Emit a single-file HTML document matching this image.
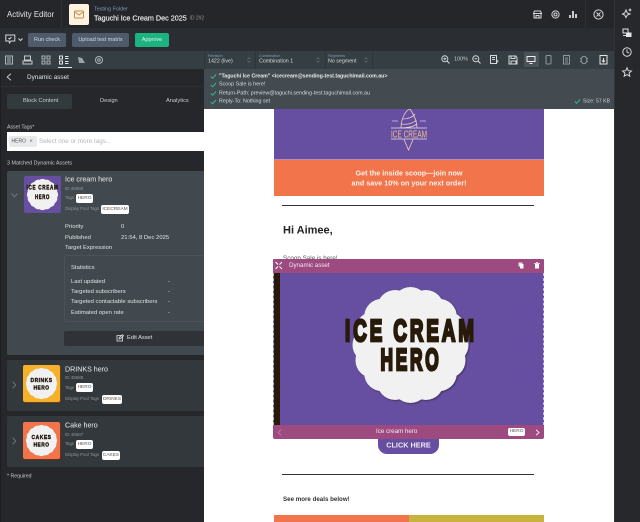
<!DOCTYPE html>
<html><head><meta charset="utf-8"><style>
html,body{margin:0;padding:0;width:640px;height:522px;overflow:hidden;background:#25272b}
body{position:relative;font-family:"Liberation Sans",sans-serif;color:#e8eaeb}
.a{position:absolute}
.t{position:absolute;white-space:nowrap;line-height:1;transform:translateY(-50%)}
svg{position:absolute;overflow:visible}
.i{fill:none;stroke:#d5d9db;stroke-width:1}
.pill{position:absolute;background:#fff;color:#555;border-radius:2px;font-size:4.8px;line-height:9px;height:9px;text-align:center}
.btn{position:absolute;top:33px;height:14px;line-height:14px;font-size:5.5px;text-align:center;border-radius:2px;color:#d3d9e0;background:#4d5b6b}
.m{font-size:5.900px;color:#dfe2e3}
.h{font-family:"Liberation Sans";font-weight:bold;fill:#20150a;stroke:#20150a}
</style></head><body>
<svg width="0" height="0" style="position:absolute"><defs>
<g id="sc" fill="#f1f1f1"><circle cx="0" cy="0" r="50"/>
<circle cx="0" cy="-40" r="18"/><circle cx="15.300" cy="-37" r="18"/><circle cx="28.300" cy="-28.300" r="18"/><circle cx="37" cy="-15.300" r="18"/><circle cx="40" cy="0" r="18"/><circle cx="37" cy="15.300" r="18"/><circle cx="28.300" cy="28.300" r="18"/><circle cx="15.300" cy="37" r="18"/><circle cx="0" cy="40" r="18"/><circle cx="-15.300" cy="37" r="18"/><circle cx="-28.300" cy="28.300" r="18"/><circle cx="-37" cy="15.300" r="18"/><circle cx="-40" cy="0" r="18"/><circle cx="-37" cy="-15.300" r="18"/><circle cx="-28.300" cy="-28.300" r="18"/><circle cx="-15.300" cy="-37" r="18"/></g>
</defs></svg>

<!-- top bars -->
<div class="a" style="left:0;top:0;width:614px;height:28px;background:#24262a"></div>
<div class="a" style="left:0;top:28px;width:614px;height:23px;background:#2a2d32"></div>
<div class="a" style="left:0;top:51px;width:614px;height:18px;background:#353e42"></div>
<div class="a" style="left:61px;top:0;width:1px;height:28px;background:#2e3135"></div>
<div class="a" style="left:585px;top:0;width:1px;height:28px;background:#2e3135"></div>
<div class="a" style="left:614px;top:0;width:26px;height:522px;background:#26282c;border-left:1px solid #30343a;box-sizing:border-box"></div>

<div class="t" style="left:7px;top:14.500px;font-size:7.800px;color:#e4e6e8">Activity Editor</div>
<div class="a" style="left:69px;top:4px;width:20px;height:21px;background:#fdf3e0;border-radius:2px"></div>
<svg style="left:74px;top:10px" width="10" height="9"><rect x=".5" y="1" width="9" height="7" rx="1" fill="none" stroke="#c98a4a"/><path d="M.8 2L5 5l4.200-3" fill="none" stroke="#c98a4a"/></svg>
<div class="t" style="left:94px;top:10px;font-size:5.400px;color:#7d98bd">Testing Folder</div>
<div class="t" style="left:94px;top:18px;font-size:7.200px;color:#eceeef;-webkit-text-stroke:.15px #eceeef">Taguchi Ice Cream Dec 2025</div>
<div class="t" style="left:189.500px;top:18.500px;font-size:5px;color:#8a8f94">ID 292</div>

<!-- header right icons -->
<svg style="left:533px;top:10px" width="9" height="9"><path class="i" d="M1 3.500V8h7V3.500M.5 3.500L1.500 1h6l1 2.500zM3 8V5.500h3V8"/></svg>
<svg style="left:551px;top:10px" width="9" height="9"><circle class="i" cx="4.500" cy="4.500" r="3.600"/><circle class="i" cx="4.500" cy="4.500" r="1.500"/></svg>
<svg style="left:569px;top:10px" width="9" height="9"><path d="M0 5h2v3H0zM3 1h2v7H3zM6 4h2v4H6z" fill="#c9cdd0"/></svg>
<svg style="left:593px;top:9px" width="11" height="11"><circle class="i" cx="5.500" cy="5.500" r="4.600"/><path class="i" d="M3.500 3.500l4 4M7.500 3.500l-4 4"/></svg>
<!-- rail icons -->
<svg style="left:622px;top:8px" width="10" height="10"><path class="i" d="M4 2l1.300 3L8 6 5.300 7 4 9.500 2.700 7 .5 6l2.200-1zM8 .5v3M6.500 2h3"/></svg>
<svg style="left:622px;top:28px" width="10" height="10"><rect x="1" y="1" width="5" height="4" fill="none" stroke="#e2e5e6"/><rect x="4" y="4.500" width="5.500" height="4.500" fill="#e2e5e6"/><path class="i" d="M1 7.500h3"/></svg>
<svg style="left:622px;top:47px" width="10" height="10"><circle class="i" cx="5" cy="5" r="4.200"/><path class="i" d="M5 2.500V5l2 1.200"/></svg>
<svg style="left:622px;top:67px" width="10" height="10"><path class="i" d="M5 .8l1.300 2.900 3.100.3-2.300 2.100.7 3.100L5 7.600 2.200 9.200l.7-3.100L.6 4l3.100-.3z"/></svg>

<!-- toolbar -->
<svg style="left:5px;top:34px" width="11" height="10"><path class="i" d="M.8 1h9v6H6L4.500 9 4 7H.8z"/><path class="i" d="M3.500 4l1 1 2-2"/></svg>
<svg style="left:18px;top:38px" width="5" height="3"><path class="i" d="M.5.500L2.500 2.500 4.500.500" stroke-width=".7"/></svg>
<div class="btn" style="left:28px;width:38px">Run check</div>
<div class="btn" style="left:72px;width:57px">Upload test matrix</div>
<div class="btn" style="left:135px;width:34px;background:#1cb381;color:#d8f5ea">Approve</div>

<!-- tool icons -->
<svg style="left:5px;top:55px" width="100" height="10" class="i">
<rect x=".5" y="1" width="7" height="8" fill="none" stroke="#aeb5b8"/><path d="M2 3h4M2 5h4M2 7h4" stroke="#aeb5b8"/>
<path d="M19.500 1h6v4h-6zM18 6h9v3h-9z" fill="none" stroke="#c3c9cb"/>
<path d="M37 1h3v3h-3zM42 1h3v3h-3zM37 6h3v3h-3zM42 6h3v3h-3z" fill="none" stroke="#aeb5b8"/>
<path d="M54.500 1h3v3h-3zM60 1.500h3.500M60 3.500h3.500M54.500 6h3v3h-3zM60 6.500h3.500M60 8.500h3.500" fill="none" stroke="#e2e5e6"/>
<path d="M73 2l4 1 3 5H74z" fill="#9ca4a8" stroke="none"/>
<circle cx="94" cy="5" r="3.500" fill="none" stroke="#aeb5b8"/><circle cx="94" cy="5" r="1.300" fill="none" stroke="#aeb5b8"/>
</svg>
<div class="a" style="left:58px;top:67px;width:14px;height:1px;background:#e2e5e6"></div>

<div class="a" style="left:204px;top:51px;width:1px;height:18px;background:#2e3538"></div>
<div class="a" style="left:255px;top:51px;width:1px;height:18px;background:#2e3538"></div>
<div class="a" style="left:325px;top:51px;width:1px;height:18px;background:#2e3538"></div>
<div class="a" style="left:372px;top:51px;width:1px;height:18px;background:#2e3538"></div>
<div class="t" style="left:208px;top:56.500px;font-size:3.800px;color:#7f9fc2">Revision</div>
<div class="t" style="left:208px;top:62px;font-size:5.300px;color:#d8dcde">1422 (live)</div>
<div class="t" style="left:259px;top:56.500px;font-size:3.800px;color:#7f9fc2">Combination</div>
<div class="t" style="left:259px;top:62px;font-size:5.300px;color:#d8dcde">Combination 1</div>
<div class="t" style="left:328px;top:56.500px;font-size:3.800px;color:#7f9fc2">Segments</div>
<div class="t" style="left:328px;top:62px;font-size:5.300px;color:#d8dcde">No segment</div>
<svg style="left:247px;top:57px" width="4" height="6"><path d="M.5 2.200L2 .7l1.500 1.500M.5 3.800L2 5.300l1.500-1.500" fill="none" stroke="#717a7e" stroke-width=".6"/></svg>
<svg style="left:316px;top:57px" width="4" height="6"><path d="M.5 2.200L2 .7l1.500 1.500M.5 3.800L2 5.300l1.500-1.500" fill="none" stroke="#717a7e" stroke-width=".6"/></svg>
<svg style="left:364px;top:57px" width="4" height="6"><path d="M.5 2.200L2 .7l1.500 1.500M.5 3.800L2 5.300l1.500-1.500" fill="none" stroke="#717a7e" stroke-width=".6"/></svg>

<svg style="left:441px;top:55px" width="9" height="9"><circle class="i" cx="3.800" cy="3.800" r="3"/><path class="i" d="M6 6l2.500 2.500M2.500 3.800h2.600M3.800 2.500v2.600"/></svg>
<div class="t" style="left:454px;top:60px;font-size:5.500px;color:#c4c9cb">100%</div>
<svg style="left:472px;top:55px" width="9" height="9"><circle class="i" cx="3.800" cy="3.800" r="3"/><path class="i" d="M6 6l2.500 2.500M2.500 3.800h2.600"/></svg>
<div class="a" style="left:524px;top:52px;width:15px;height:15px;background:#485257;border-radius:1px"></div>
<svg style="left:490px;top:55px" width="120" height="10" class="i">
<path d="M.5.500h6v8h-6zM2 2.500h3M2 4.500h3M6 6h2.500M7 5v3" fill="none" stroke="#d5d9db"/>
<path d="M19 1h7l1 1.500V9h-8zM21 1v2.500h4V1M21 9V6h5v3" fill="none" stroke="#d5d9db"/>
<path d="M37 1.500h8v5h-8zM39.500 8.500h3" fill="none" stroke="#eceeef"/>
<rect x="56" y=".5" width="5" height="8.500" rx="1" fill="none" stroke="#8f979b"/>
<path d="M73.500.5h6v8.500h-6zM75 3h3M75 5h3M75 7h3" fill="none" stroke="#8f979b"/>
<ellipse cx="94" cy="5" rx="2.800" ry="3.800" fill="none" stroke="#8f979b"/><path d="M90 3l1.500 1M98 3l-1.500 1M90 7l1.500-1M98 7l-1.500-1" stroke="#8f979b" fill="none"/>
<rect x="110" y=".5" width="7" height="8.500" fill="none" stroke="#e2e5e6"/><path d="M113.500 3v4M112 5.500l1.500 1.500 1.500-1.500" fill="none" stroke="#e2e5e6"/>
</svg>

<!-- preview -->
<div class="a" style="left:204px;top:69px;width:410px;height:453px;background:#fff"></div>
<div class="a" style="left:274px;top:109px;width:269.500px;height:50px;background:#664ea0"></div>
<svg style="left:388px;top:109px" width="46" height="42">
<path d="M22 0c-4 1-9 9-9 19M22 0c2 3 7 11 7 19M15 10c5 0 10-2 12-5M13.500 15c6 1 12-1 15-4M13 19c6 0 12-1 16-4" fill="none" stroke="#f0d2c0" stroke-width=".8"/>
<path d="M3 19h36M3 30h36" stroke="#e9e2f2" stroke-width=".8"/>
<path d="M4 12h6M32 12h6" stroke="#b9a8d6" stroke-width="1"/>
<path d="M16 30.500l4.500 10.500 4.500-10.500" fill="none" stroke="#f0d2c0" stroke-width=".8"/>
<text x="21" y="28.500" text-anchor="middle" font-family="Liberation Sans" font-size="10" fill="#f2c58e" textLength="36" lengthAdjust="spacingAndGlyphs">ICE CREAM</text>
</svg>
<div class="a" style="left:274px;top:159px;width:270px;height:1px;background:#b78ac0"></div>
<div class="a" style="left:274px;top:160px;width:270px;height:36px;background:#f2744a"></div>
<div class="t" style="left:274px;width:270px;top:172.500px;text-align:center;font-size:7.200px;font-weight:bold;color:#fdf1ea;transform:translate(0,-50%)">Get the inside scoop—join now</div>
<div class="t" style="left:274px;width:270px;top:182.500px;text-align:center;font-size:7.200px;font-weight:bold;color:#fdf1ea;transform:translate(0,-50%)">and save 10% on your next order!</div>
<div class="a" style="left:282px;top:204.500px;width:252px;height:1px;background:#333"></div>
<div class="t" style="left:283px;top:230.500px;font-size:11px;font-weight:bold;color:#222">Hi Aimee,</div>
<div class="t" style="left:283px;top:259px;font-size:6.300px;color:#555">Scoop Sale is here!</div>

<!-- dynamic asset block -->
<div class="a" style="left:273px;top:259px;width:271px;height:14.500px;background:#9c4a80;border-radius:1px 1px 0 0"></div>
<div class="a" style="left:273px;top:273px;width:271px;height:152px;background:#664ea0;border-left:1px dashed #bbb;border-right:1px dashed #cbb8ee;box-sizing:border-box"></div>
<div class="a" style="left:274px;top:273px;width:6px;height:152px;background:#271a08"></div>
<svg style="left:275px;top:261px" width="8" height="9"><path d="M.5 1L3 3.500M7 1L4.500 3.500M.5 8L3 5.500M7 8L4.500 5.500" stroke="#fff" stroke-width="1" fill="none"/></svg>
<div class="t" style="left:289px;top:266px;font-size:6.200px;color:#f3e6ee">Dynamic asset</div>
<svg style="left:518px;top:262px" width="6" height="7"><path d="M.5.500h4v4h-4z" fill="#e6e0e6"/><path d="M2 2h3.500v4.500H2z" fill="#fff"/></svg>
<svg style="left:534px;top:262px" width="6" height="7"><path d="M1 2h4v4.500H1zM0 1h6v.7H0zM2 .2h2V1H2z" fill="#fff"/></svg>
<svg style="left:344px;top:279px;filter:drop-shadow(1px 1px .7px rgba(40,30,50,.55))" width="134" height="132"><g transform="translate(66.500,66)"><use href="#sc"/></g></svg>
<svg style="left:340px;top:310px" width="142" height="66">
<text class="h" x="71" y="31" text-anchor="middle" font-size="31" stroke-width="2.800" letter-spacing="5" textLength="132" lengthAdjust="spacingAndGlyphs" style="fill:#271a08;stroke:#271a08">ICE CREAM</text>
<text class="h" x="71" y="60" text-anchor="middle" font-size="31" stroke-width="2.800" letter-spacing="5" textLength="61" lengthAdjust="spacingAndGlyphs" style="fill:#271a08;stroke:#271a08">HERO</text>
</svg>
<div class="a" style="left:273px;top:425px;width:271px;height:14px;background:#9c4a80;border-radius:0 0 2px 2px"></div>
<svg style="left:277px;top:429px" width="5" height="7"><path d="M4 .7L1 3.500 4 6.300" fill="none" stroke="#b97aa3" stroke-width="1"/></svg>
<div class="t" style="left:376px;top:432px;font-size:6.200px;color:#f6e9f1">Ice cream hero</div>
<div class="pill" style="left:508px;top:428px;width:17px;height:8px;line-height:8px">HERO</div>
<svg style="left:535px;top:429px" width="5" height="7"><path d="M1 .7L4 3.500 1 6.300" fill="none" stroke="#f2e3ec" stroke-width="1"/></svg>
<div class="a" style="left:378px;top:439px;width:61px;height:15px;background:#664ea0;border-radius:0 0 9px 9px"></div>
<div class="t" style="left:378px;width:61px;top:445px;text-align:center;font-size:7.300px;font-weight:bold;color:#f0ebf7;transform:translate(0,-50%)">CLICK HERE</div>
<div class="a" style="left:282px;top:474px;width:252px;height:1px;background:#333"></div>
<div class="t" style="left:283px;top:499.500px;font-size:6.200px;font-weight:bold;color:#333">See more deals below!</div>
<div class="a" style="left:274px;top:515px;width:135px;height:7px;background:#f2744a"></div>
<div class="a" style="left:409px;top:515px;width:135px;height:7px;background:#c8b33f"></div>

<!-- notice -->
<div class="a" style="left:204px;top:69px;width:410px;height:40px;background:#434b50"></div>
<svg style="left:210px;top:73px" width="7" height="34"><path d="M.8 3.500l1.800 1.800L6 1.500M.8 12l1.800 1.800L6 10M.8 20.500l1.800 1.800L6 18.500M.8 29l1.800 1.800L6 27" fill="none" stroke="#2fb98e" stroke-width="1"/></svg>
<div class="t" style="left:219px;top:76.500px;font-size:5.250px;font-weight:bold;color:#e9ebec">"Taguchi Ice Cream" &lt;icecream@sending-test.taguchimail.com.au&gt;</div>
<div class="t" style="left:219px;top:85px;font-size:5.350px;color:#d6dadc">Scoop Sale is here!</div>
<div class="t" style="left:219px;top:93.500px;font-size:5.350px;color:#d6dadc">Return-Path: preview@taguchi.sending-test.taguchimail.com.au</div>
<div class="t" style="left:219px;top:102px;font-size:5.350px;color:#d6dadc">Reply-To: Nothing set</div>
<svg style="left:574px;top:98px" width="7" height="7"><path d="M.8 3.500l1.800 1.800L6 1.500" fill="none" stroke="#2fb98e" stroke-width="1"/></svg>
<div class="t" style="left:583px;top:101.500px;font-size:5.200px;color:#c9ced0">Size: 57 KB</div>

<!-- left panel -->
<div class="a" style="left:0;top:69px;width:204px;height:453px;background:#25272b;border-left:1px solid #1d1e21;box-sizing:border-box"></div>
<div class="a" style="left:0;top:86px;width:204px;height:1px;background:#2c2f33"></div>
<svg style="left:6px;top:73px" width="6" height="8"><path d="M5 .7L1.200 4 5 7.300" fill="none" stroke="#d5d9db" stroke-width=".9"/></svg>
<div class="t" style="left:27px;top:77.500px;font-size:6.400px;color:#dfe2e3">Dynamic asset</div>
<div class="a" style="left:7px;top:94px;width:65px;height:15px;background:#323a3e;border-radius:2px"></div>
<div class="t" style="left:23px;top:101.500px;font-size:5.700px;color:#c8cdd0">Block Content</div>
<div class="t" style="left:100px;top:101.500px;font-size:5.700px;color:#c8cdd0">Design</div>
<div class="t" style="left:166px;top:101.500px;font-size:5.700px;color:#c8cdd0">Analytics</div>
<div class="t" style="left:7px;top:127.500px;font-size:5.200px;color:#c5c9cc">Asset Tags*</div>
<div class="a" style="left:7px;top:132px;width:197px;height:19px;background:#fff"></div>
<div class="a" style="left:9px;top:136px;width:28px;height:11px;background:#e8eaeb;border-radius:2px"></div>
<div class="t" style="left:11.500px;top:142px;font-size:5px;color:#555">HERO</div>
<div class="t" style="left:29.500px;top:142px;font-size:5.500px;color:#555">×</div>
<div class="t" style="left:39px;top:142px;font-size:6.300px;color:#b3b6b9">Select one or more tags...</div>
<div class="t" style="left:7px;top:163.500px;font-size:5.400px;color:#c5c9cc">3 Matched Dynamic Assets</div>

<!-- card 1 -->
<div class="a" style="left:7px;top:171px;width:197px;height:184px;background:#42494e;border-radius:2px 0 0 2px"></div>
<svg style="left:11px;top:193px" width="7" height="5"><path d="M.7.700L3.500 3.800 6.300.700" fill="none" stroke="#798185" stroke-width=".8"/></svg>
<div class="a" style="left:24px;top:176px;width:37px;height:37px;background:#664ea0;border-radius:2px"></div>
<svg style="left:24px;top:176px" width="37" height="37"><g transform="translate(18.500,18.500) scale(.27)"><use href="#sc"/></g>
<text class="h" x="18.500" y="13.500" text-anchor="middle" font-size="6.500" stroke-width=".5" letter-spacing="1" textLength="32" lengthAdjust="spacingAndGlyphs">ICE CREAM</text>
<text class="h" x="18.500" y="23" text-anchor="middle" font-size="6.500" stroke-width=".5" letter-spacing="1" textLength="15" lengthAdjust="spacingAndGlyphs">HERO</text></svg>
<div class="t" style="left:65px;top:180px;font-size:7.100px;color:#eceeef">Ice cream hero</div>
<div class="t" style="left:65px;top:188.500px;font-size:4.500px;color:#8f979b">ID 45690</div>
<div class="t" style="left:65px;top:198px;font-size:4.300px;color:#8f979b">Tags</div>
<div class="pill" style="left:76px;top:193.500px;width:17px">HERO</div>
<div class="t" style="left:65px;top:209px;font-size:4.300px;color:#8f979b">Display Pool Tags</div>
<div class="pill" style="left:101px;top:204.500px;width:28px">ICECREAM</div>
<div class="t m" style="left:65px;top:228px">Priority</div>
<div class="t m" style="left:121px;top:228px">0</div>
<div class="t m" style="left:65px;top:238.500px">Published</div>
<div class="t m" style="left:121px;top:238.500px">21:54, 8 Dec 2025</div>
<div class="t m" style="left:65px;top:248.500px">Target Expression</div>
<div class="a" style="left:64px;top:255px;width:140px;height:67px;border:1px solid #4b5358;border-right:0;box-sizing:border-box;border-radius:2px 0 0 2px"></div>
<div class="t m" style="left:71px;top:268.500px">Statistics</div>
<div class="t m" style="left:71px;top:282.500px">Last updated</div><div class="t m" style="left:168px;top:282.500px">-</div>
<div class="t m" style="left:71px;top:293px">Targeted subscribers</div><div class="t m" style="left:168px;top:293px">-</div>
<div class="t m" style="left:71px;top:303px">Targeted contactable subscribers</div><div class="t m" style="left:168px;top:303px">-</div>
<div class="t m" style="left:71px;top:313.500px">Estimated open rate</div><div class="t m" style="left:168px;top:313.500px">-</div>
<div class="a" style="left:64px;top:331px;width:140px;height:15px;background:#2f3337;border-radius:2px 0 0 2px"></div>
<svg style="left:116px;top:334px" width="8" height="8"><path d="M6 1.500H1v5.500h5.500V3M3 5l.3-1.500L6.500.7l1 1L4.500 4.700z" fill="none" stroke="#e5e7e8" stroke-width=".8"/></svg>
<div class="t" style="left:127px;top:338.500px;font-size:5.700px;color:#dfe2e3">Edit Asset</div>

<!-- card 2 -->
<div class="a" style="left:7px;top:360px;width:197px;height:51px;background:#32383c;border-radius:2px 0 0 2px"></div>
<svg style="left:12px;top:381px" width="5" height="8"><path d="M.7.700L3.800 4 .7 7.300" fill="none" stroke="#798185" stroke-width=".8"/></svg>
<div class="a" style="left:23px;top:365px;width:37px;height:37px;background:#f6b12b;border-radius:2px;box-shadow:1px 1px 0 #6d3f10"></div>
<svg style="left:23px;top:365px" width="37" height="37"><g transform="translate(18.500,18.500) scale(.27)"><use href="#sc"/></g>
<text class="h" x="18.500" y="17" text-anchor="middle" font-size="5.800" stroke-width=".4" letter-spacing=".6" textLength="22" lengthAdjust="spacingAndGlyphs">DRINKS</text>
<text class="h" x="18.500" y="24.500" text-anchor="middle" font-size="5.800" stroke-width=".4" letter-spacing=".6" textLength="16" lengthAdjust="spacingAndGlyphs">HERO</text></svg>
<div class="t" style="left:65px;top:369.500px;font-size:7.100px;color:#eceeef">DRINKS hero</div>
<div class="t" style="left:65px;top:378px;font-size:4.500px;color:#8f979b">ID 45688</div>
<div class="t" style="left:65px;top:387.500px;font-size:4.300px;color:#8f979b">Tags</div>
<div class="pill" style="left:76px;top:383px;width:17px">HERO</div>
<div class="t" style="left:65px;top:399px;font-size:4.300px;color:#8f979b">Display Pool Tags</div>
<div class="pill" style="left:102px;top:394.500px;width:20px">DRINKS</div>

<!-- card 3 -->
<div class="a" style="left:7px;top:416px;width:197px;height:51px;background:#32383c;border-radius:2px 0 0 2px"></div>
<svg style="left:12px;top:437px" width="5" height="8"><path d="M.7.700L3.800 4 .7 7.300" fill="none" stroke="#798185" stroke-width=".8"/></svg>
<div class="a" style="left:23px;top:421.500px;width:37px;height:37px;background:#f2744a;border-radius:2px;box-shadow:1px 1px 0 #6d3010"></div>
<svg style="left:23px;top:421.500px" width="37" height="37"><g transform="translate(18.500,18.500) scale(.27)"><use href="#sc"/></g>
<text class="h" x="18.500" y="17" text-anchor="middle" font-size="5.800" stroke-width=".4" letter-spacing=".6" textLength="20" lengthAdjust="spacingAndGlyphs">CAKES</text>
<text class="h" x="18.500" y="24.500" text-anchor="middle" font-size="5.800" stroke-width=".4" letter-spacing=".6" textLength="16" lengthAdjust="spacingAndGlyphs">HERO</text></svg>
<div class="t" style="left:65px;top:426px;font-size:7.100px;color:#eceeef">Cake hero</div>
<div class="t" style="left:65px;top:434.500px;font-size:4.500px;color:#8f979b">ID 45687</div>
<div class="t" style="left:65px;top:444px;font-size:4.300px;color:#8f979b">Tags</div>
<div class="pill" style="left:76px;top:439.500px;width:17px">HERO</div>
<div class="t" style="left:65px;top:455px;font-size:4.300px;color:#8f979b">Display Pool Tags</div>
<div class="pill" style="left:102px;top:450.500px;width:18px">CAKES</div>
<div class="t" style="left:7px;top:477px;font-size:5.200px;color:#c5c9cc">* Required</div>
</body></html>
